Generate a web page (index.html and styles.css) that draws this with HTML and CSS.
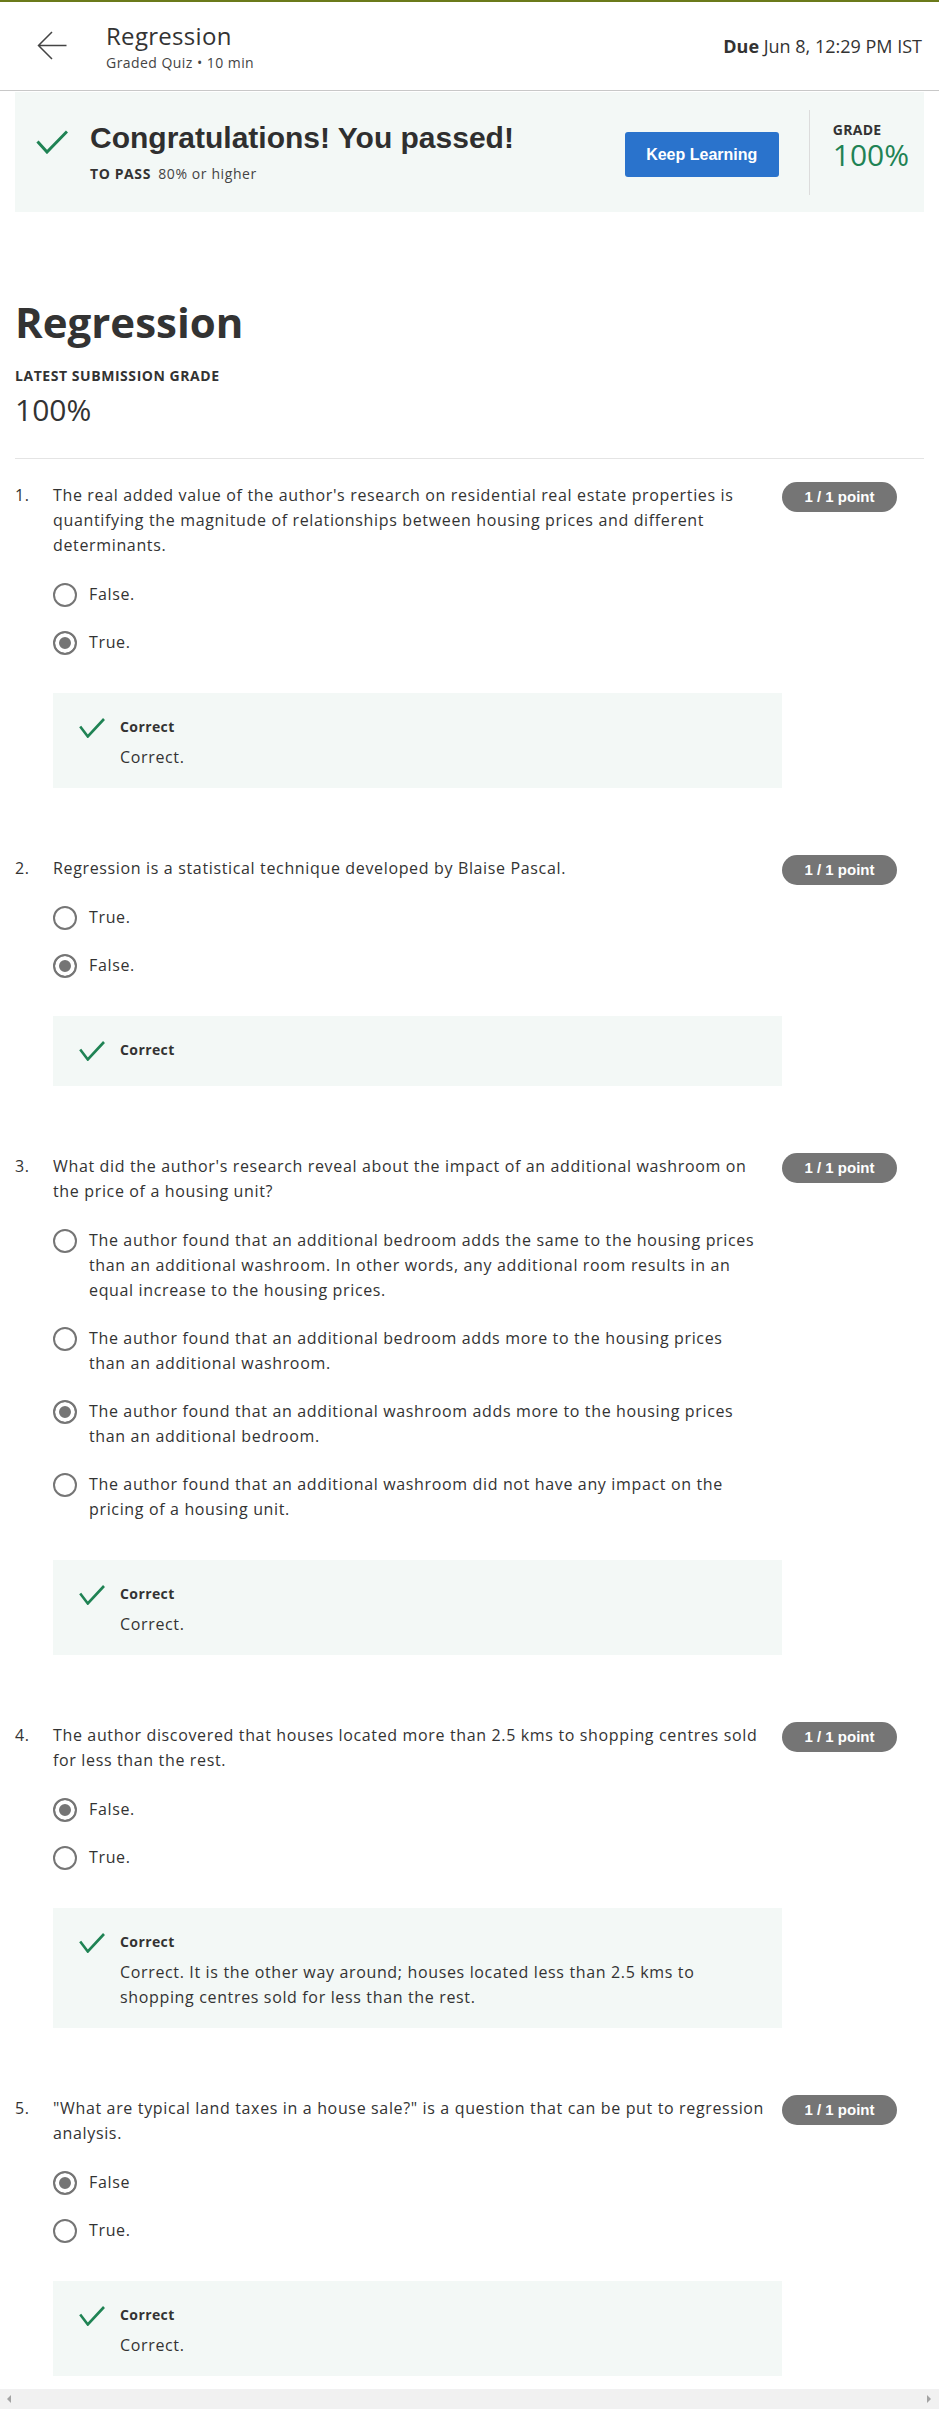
FILE: index.html
```html
<!DOCTYPE html>
<html lang="en">
<head>
<meta charset="utf-8">
<title>Regression</title>
<link rel="stylesheet" href="styles.css">
</head>
<body>
<header class="topbar">
  <a class="back" href="#" aria-label="Back">
    <svg width="30" height="30" viewBox="0 0 30 30"><path d="M1.5 14.5 H29.5 M15 1 L1.5 14.5 L15 28" fill="none" stroke="#444" stroke-width="1.5"/></svg>
  </a>
  <div class="title-block">
    <div class="title">Regression</div>
    <div class="sub">Graded Quiz • 10 min</div>
  </div>
  <div class="due"><b>Due</b> Jun 8, 12:29 PM IST</div>
</header>

<main class="page">
  <section class="banner">
    <div class="banner-main">
      <svg class="banner-check" width="32" height="24" viewBox="0 0 32 24"><path d="M1.5 11.5 L11 22 L31 1.5" fill="none" stroke="#1f8354" stroke-width="3"/></svg>
      <div>
        <div class="congrats">Congratulations! You passed!</div>
        <div class="topass"><b>TO PASS</b> 80% or higher</div>
      </div>
    </div>
    <button class="keep">Keep Learning</button>
    <div class="grade">
      <div class="grade-label">GRADE</div>
      <div class="grade-val">100%</div>
    </div>
  </section>

  <h1 class="heading">Regression</h1>
  <div class="latest-label">LATEST SUBMISSION GRADE</div>
  <div class="latest-val">100%</div>
  <div class="divider"></div>

  <ol class="questions">
    <li class="q">
      <div class="q-num">1.</div>
      <div class="q-body">
        <div class="q-text">The real added value of the author's research on residential real estate properties is quantifying the magnitude of relationships between housing prices and different determinants.</div>
        <div class="options">
          <div class="opt"><span class="radio"></span><span class="opt-text">False.</span></div>
          <div class="opt selected"><span class="radio"></span><span class="opt-text">True.</span></div>
        </div>
        <div class="feedback">
          <svg class="fb-icon" width="26" height="20" viewBox="0 0 26 20"><path d="M1.2 8.5 L8.8 18.5 L25 1" fill="none" stroke="#1f8354" stroke-width="2.6"/></svg>
          <div class="fb-content">
            <div class="fb-title">Correct</div>
            <div class="fb-text">Correct.</div>
          </div>
        </div>
      </div>
      <div class="badge">1 / 1 point</div>
    </li>

    <li class="q">
      <div class="q-num">2.</div>
      <div class="q-body">
        <div class="q-text">Regression is a statistical technique developed by Blaise Pascal.</div>
        <div class="options">
          <div class="opt"><span class="radio"></span><span class="opt-text">True.</span></div>
          <div class="opt selected"><span class="radio"></span><span class="opt-text">False.</span></div>
        </div>
        <div class="feedback">
          <svg class="fb-icon" width="26" height="20" viewBox="0 0 26 20"><path d="M1.2 8.5 L8.8 18.5 L25 1" fill="none" stroke="#1f8354" stroke-width="2.6"/></svg>
          <div class="fb-content">
            <div class="fb-title">Correct</div>
          </div>
        </div>
      </div>
      <div class="badge">1 / 1 point</div>
    </li>

    <li class="q">
      <div class="q-num">3.</div>
      <div class="q-body">
        <div class="q-text">What did the author's research reveal about the impact of an additional washroom on the price of a housing unit?</div>
        <div class="options">
          <div class="opt"><span class="radio"></span><span class="opt-text">The author found that an additional bedroom adds the same to the housing prices than an additional washroom. In other words, any additional room results in an equal increase to the housing prices.</span></div>
          <div class="opt"><span class="radio"></span><span class="opt-text">The author found that an additional bedroom adds more to the housing prices than an additional washroom.</span></div>
          <div class="opt selected"><span class="radio"></span><span class="opt-text">The author found that an additional washroom adds more to the housing prices than an additional bedroom.</span></div>
          <div class="opt"><span class="radio"></span><span class="opt-text">The author found that an additional washroom did not have any impact on the pricing of a housing unit.</span></div>
        </div>
        <div class="feedback">
          <svg class="fb-icon" width="26" height="20" viewBox="0 0 26 20"><path d="M1.2 8.5 L8.8 18.5 L25 1" fill="none" stroke="#1f8354" stroke-width="2.6"/></svg>
          <div class="fb-content">
            <div class="fb-title">Correct</div>
            <div class="fb-text">Correct.</div>
          </div>
        </div>
      </div>
      <div class="badge">1 / 1 point</div>
    </li>

    <li class="q">
      <div class="q-num">4.</div>
      <div class="q-body">
        <div class="q-text">The author discovered that houses located more than 2.5 kms to shopping centres sold for less than the rest.</div>
        <div class="options">
          <div class="opt selected"><span class="radio"></span><span class="opt-text">False.</span></div>
          <div class="opt"><span class="radio"></span><span class="opt-text">True.</span></div>
        </div>
        <div class="feedback">
          <svg class="fb-icon" width="26" height="20" viewBox="0 0 26 20"><path d="M1.2 8.5 L8.8 18.5 L25 1" fill="none" stroke="#1f8354" stroke-width="2.6"/></svg>
          <div class="fb-content">
            <div class="fb-title">Correct</div>
            <div class="fb-text">Correct. It is the other way around; houses located less than 2.5 kms to shopping centres sold for less than the rest.</div>
          </div>
        </div>
      </div>
      <div class="badge">1 / 1 point</div>
    </li>

    <li class="q">
      <div class="q-num">5.</div>
      <div class="q-body">
        <div class="q-text">"What are typical land taxes in a house sale?" is a question that can be put to regression analysis.</div>
        <div class="options">
          <div class="opt selected"><span class="radio"></span><span class="opt-text">False</span></div>
          <div class="opt"><span class="radio"></span><span class="opt-text">True.</span></div>
        </div>
        <div class="feedback">
          <svg class="fb-icon" width="26" height="20" viewBox="0 0 26 20"><path d="M1.2 8.5 L8.8 18.5 L25 1" fill="none" stroke="#1f8354" stroke-width="2.6"/></svg>
          <div class="fb-content">
            <div class="fb-title">Correct</div>
            <div class="fb-text">Correct.</div>
          </div>
        </div>
      </div>
      <div class="badge">1 / 1 point</div>
    </li>
  </ol>
</main>

<div class="hscroll">
  <span class="arrow-left"></span>
  <span class="arrow-right"></span>
</div>
</body>
</html>
```

FILE: styles.css
```css
* { box-sizing: border-box; }

html, body {
  margin: 0;
  padding: 0;
}

body {
  font-family: "Open Sans", "Noto Sans", sans-serif;
  color: #333;
  background: #fff;
  overflow-x: hidden;
}

/* ---------- top bar ---------- */
.topbar {
  display: flex;
  align-items: center;
  height: 91px;
  border-top: 2px solid #6b7a1a;
  border-bottom: 1px solid #c8c8c8;
  padding: 0 17px 0 37px;
}

.back {
  display: flex;
  width: 30px;
  height: 30px;
}

.title-block {
  margin-left: 39px;
  flex: 1;
}

.title {
  font-size: 24px;
  line-height: 32px;
  letter-spacing: 0.3px;
  color: #333;
}

.sub {
  margin-top: 1px;
  font-size: 14px;
  line-height: 20px;
  letter-spacing: 0.45px;
  color: #444;
}

.due {
  font-size: 18px;
  line-height: 24px;
  color: #333;
}

.due b { font-weight: 700; }

/* ---------- page ---------- */
.page {
  padding: 1px 15px 30px;
}

.banner {
  display: flex;
  align-items: center;
  height: 120px;
  background: #f3f8f6;
  padding: 0 15px 0 21px;
}

.banner-main {
  flex: 1;
  display: flex;
  align-items: flex-start;
  gap: 22px;
}

.banner-check {
  flex-shrink: 0;
  margin-top: 10px;
}

.congrats {
  font-family: "Liberation Sans", Arial, sans-serif;
  font-weight: 700;
  font-size: 30px;
  line-height: 36px;
  color: #2f2f2f;
}

.topass {
  margin-top: 8px;
  font-size: 14px;
  line-height: 20px;
  letter-spacing: 0.6px;
  color: #444;
}

.topass b {
  color: #333;
  margin-right: 3px;
}

.keep {
  font-family: "Liberation Sans", Arial, sans-serif;
  font-weight: 700;
  font-size: 16px;
  color: #fff;
  background: #2a73cc;
  border: none;
  border-radius: 3px;
  width: 154px;
  height: 45px;
  margin-top: 5px;
  margin-right: 30px;
  padding: 0;
}

.grade {
  border-left: 1px solid #dcdcdc;
  height: 85px;
  padding: 12px 0 0 23px;
}

.grade-label {
  font-size: 14px;
  font-weight: 700;
  line-height: 16px;
  letter-spacing: 0.3px;
  color: #333;
}

.grade-val {
  margin-top: 2px;
  font-size: 30px;
  line-height: 30px;
  color: #1f8354;
}

.heading {
  margin: 82px 0 0;
  font-size: 42px;
  line-height: 56px;
  font-weight: 700;
  color: #333;
}

.latest-label {
  margin-top: 16px;
  font-size: 14px;
  font-weight: 700;
  line-height: 20px;
  letter-spacing: 0.55px;
  color: #333;
}

.latest-val {
  margin-top: 4px;
  font-size: 30px;
  line-height: 40px;
  color: #333;
}

.divider {
  margin-top: 28px;
  border-top: 1px solid #e4e4e4;
}

/* ---------- questions ---------- */
.questions {
  list-style: none;
  margin: 0;
  padding: 23px 0 0;
}

.q {
  display: flex;
  align-items: flex-start;
  padding-right: 27px;
}

.q + .q {
  margin-top: 67px;
}

.q-num {
  width: 38px;
  flex-shrink: 0;
  margin-top: 1px;
  font-size: 16px;
  line-height: 25px;
  letter-spacing: 0.65px;
}

.q-body {
  flex: 1;
  min-width: 0;
}

.q-text {
  margin-top: 1px;
  padding-right: 10px;
  font-size: 16px;
  line-height: 25px;
  letter-spacing: 0.65px;
}

.badge {
  flex-shrink: 0;
  width: 115px;
  height: 30px;
  border-radius: 15px;
  background: #757575;
  color: #fff;
  font-family: "Liberation Sans", Arial, sans-serif;
  font-weight: 700;
  font-size: 15px;
  line-height: 30px;
  text-align: center;
}

.options {
  margin-top: 24px;
  display: flex;
  flex-direction: column;
  gap: 23px;
  padding-right: 20px;
}

.opt {
  display: flex;
  align-items: flex-start;
  gap: 12px;
}

.radio {
  flex-shrink: 0;
  width: 24px;
  height: 24px;
  margin-top: 1px;
  border: 2px solid #757575;
  border-radius: 50%;
  background: #fff;
}

.opt.selected .radio {
  background: #757575;
  box-shadow: inset 0 0 0 4px #fff;
}

.opt-text {
  font-size: 16px;
  line-height: 25px;
  letter-spacing: 0.65px;
}

.feedback {
  margin-top: 38px;
  display: flex;
  align-items: flex-start;
  gap: 15px;
  background: #f3f8f6;
  padding: 24px 24px 18px 26px;
}

.fb-icon {
  flex-shrink: 0;
  margin-top: 1px;
}

.fb-content {
  min-height: 28px;
}

.fb-title {
  font-size: 14px;
  font-weight: 700;
  line-height: 20px;
  letter-spacing: 0.4px;
  color: #333;
}

.fb-text {
  margin-top: 8px;
  font-size: 16px;
  line-height: 25px;
  letter-spacing: 0.65px;
}

/* ---------- fake horizontal scrollbar (browser overlay) ---------- */
.hscroll {
  position: fixed;
  left: 0;
  right: 0;
  bottom: 0;
  height: 20px;
  background: #f1f1f1;
  display: flex;
  align-items: center;
  justify-content: space-between;
  padding: 0 8px 0 7px;
}

.arrow-left {
  width: 0;
  height: 0;
  border-top: 4px solid transparent;
  border-bottom: 4px solid transparent;
  border-right: 4px solid #a3a3a3;
}

.arrow-right {
  width: 0;
  height: 0;
  border-top: 4px solid transparent;
  border-bottom: 4px solid transparent;
  border-left: 4px solid #a3a3a3;
}
```
